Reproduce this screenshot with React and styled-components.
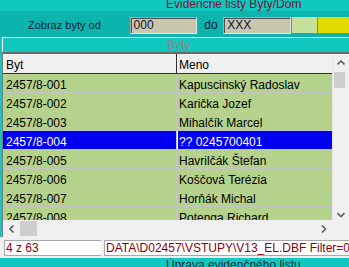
import React from "react";
import styled, { createGlobalStyle } from "styled-components";

const GlobalStyle = createGlobalStyle`
  html, body {
    margin: 0;
    padding: 0;
    background: #10c8c0;
    overflow: hidden;
  }
  * { box-sizing: border-box; }
`;

const rows = [
  ["2457/8-001", "Kapuscinský Radoslav"],
  ["2457/8-002", "Karička Jozef"],
  ["2457/8-003", "Mihalčík Marcel"],
  ["2457/8-004", "?? 0245700401"],
  ["2457/8-005", "Havrilčák Štefan"],
  ["2457/8-006", "Koščová Terézia"],
  ["2457/8-007", "Horňák Michal"],
  ["2457/8-008", "Potenga Richard"],
];

const Chevron = ({ dir }) => {
  const pts = {
    up: "0.5,4.5 4,1 7.5,4.5",
    down: "0.5,1 4,4.5 7.5,1",
    left: "4.5,0.5 1,4 4.5,7.5",
    right: "1,0.5 4.5,4 1,7.5",
  }[dir];
  const vertical = dir === "up" || dir === "down";
  return (
    <svg width={vertical ? 8 : 6} height={vertical ? 6 : 8} viewBox={vertical ? "0 0 8 6" : "0 0 6 8"}>
      <polyline points={pts} fill="none" stroke="#606060" strokeWidth="1.6" />
    </svg>
  );
};

const App = () => {
  return (
    <Page>
      <GlobalStyle />
      <TitleBar>
        <TitleText>Evidencne listy Byty/Dom</TitleText>
      </TitleBar>

      <FilterBand>
        <FieldLabel>Zobraz byty od</FieldLabel>
        <InputBox>000</InputBox>
        <DoLabel>do</DoLabel>
        <InputBox>XXX</InputBox>
        <Swatch $color="#c4e09c" $width={25} />
        <Swatch $color="#e0dc00" $width={31} />
      </FilterBand>

      <PanelCaption>Byty</PanelCaption>

      <GridFrame>
        <Table>
          <HeaderRow>
            <Cell $first $header>Byt</Cell>
            <Cell $header>Meno</Cell>
          </HeaderRow>
          {rows.map(([byt, meno], i) => (
            <Row key={byt} $selected={i === 3}>
              <Cell $first>{byt}</Cell>
              <Cell $focus={i === 3}>{meno}</Cell>
            </Row>
          ))}
        </Table>

        <VScroll>
          <ScrollBtn>
            <Chevron dir="up" />
          </ScrollBtn>
          <VThumb />
          <VTrack />
          <ScrollBtn $end>
            <Chevron dir="down" />
          </ScrollBtn>
        </VScroll>

        <HScroll>
          <ScrollBtn $wide>
            <Chevron dir="left" />
          </ScrollBtn>
          <HThumb />
          <HTrack />
          <ScrollBtn $wide>
            <Chevron dir="right" />
          </ScrollBtn>
        </HScroll>
        <Corner />
      </GridFrame>

      <StatusBar>
        <StatusBox $width={97}>4 z 63</StatusBox>
        <StatusBox>DATA\D02457\VSTUPY\V13_EL.DBF Filter=0</StatusBox>
      </StatusBar>

      <BottomBar>
        <BottomText>Úprava evidenčného listu</BottomText>
      </BottomBar>
    </Page>
  );
};

export default App;

const Page = styled.div`
  width: 349px;
  height: 267px;
  overflow: hidden;
  display: flex;
  flex-direction: column;
  background: #10c8c0;
  font-family: "Liberation Sans", Arial, sans-serif;
  font-size: 12px;
`;

const TitleBar = styled.div`
  height: 11px;
  flex: none;
  overflow: hidden;
  background: #10c8c0;
`;

const TitleText = styled.div`
  margin-top: -3px;
  padding-left: 166px;
  line-height: 14px;
  font-size: 12px;
  color: #7a1030;
  white-space: nowrap;
`;

const FilterBand = styled.div`
  height: 26px;
  flex: none;
  display: flex;
  align-items: flex-start;
  padding-top: 6px;
  background: #0db4ae;
  white-space: nowrap;
`;

const FieldLabel = styled.div`
  width: 130px;
  padding-left: 28px;
  font-size: 11px;
  line-height: 17px;
  color: #0a1a30;
`;

const DoLabel = styled.div`
  width: 26px;
  padding-left: 7px;
  font-size: 12px;
  line-height: 16px;
  color: #0a1a30;
`;

const InputBox = styled.div`
  width: 68px;
  height: 17px;
  overflow: hidden;
  padding: 1px 0 0 3px;
  background: #c8c6ac;
  border: 1px solid #a8a8a8;
  border-right-color: #e4e4e4;
  border-bottom-color: #e4e4e4;
  box-shadow: inset 1px 1px 0 #505050;
  font-size: 12px;
  line-height: 13px;
  color: #101030;
`;

const Swatch = styled.div`
  flex: none;
  width: ${(p) => p.$width}px;
  height: 16px;
  margin-left: 1px;
  background: ${(p) => p.$color};
`;

const PanelCaption = styled.div`
  height: 15px;
  flex: none;
  margin-left: 2px;
  border-top: 1px solid #ffffff;
  border-left: 1px solid #ffffff;
  padding-left: 164px;
  line-height: 14px;
  font-size: 12px;
  color: #8a8a8a;
  overflow: hidden;
`;

const GridFrame = styled.div`
  flex: none;
  margin-left: 2px;
  border-top: 2px solid #6a6a6a;
  border-left: 1px solid #7a7a7a;
  display: grid;
  grid-template-columns: 1fr 17px;
  grid-template-rows: 166px 17px;
  background: #f0f0f0;
`;

const Table = styled.div`
  overflow: hidden;
  display: flex;
  flex-direction: column;
  background: #f0f0f0;
`;

const Row = styled.div`
  flex: none;
  display: grid;
  grid-template-columns: 174px 1fr;
  height: 19px;
  border-bottom: 1px solid #c4c4c4;
  background: ${(p) => (p.$selected ? "#0000f0" : "#b4d28c")};
  color: ${(p) => (p.$selected ? "#ffffff" : "#000000")};
`;

const HeaderRow = styled(Row)`
  height: 20px;
  border-bottom: 1px solid #303030;
  background: #f0f0f0;
  color: #000000;
`;

const Cell = styled.div`
  overflow: hidden;
  white-space: nowrap;
  padding-top: 2px;
  padding-left: ${(p) => (p.$first ? "3px" : "2px")};
  line-height: 18px;
  font-size: 12px;
  border-right: ${(p) =>
    p.$first ? `1px solid ${p.$header ? "#303030" : "#c4c4c4"}` : "none"};
  box-shadow: ${(p) => (p.$focus ? "inset 1px 0 0 #ffffff" : "none")};
`;

const VScroll = styled.div`
  display: flex;
  flex-direction: column;
  background: #f0f0f0;
  border-left: 1px solid #e6e6e6;
`;

const ScrollBtn = styled.div`
  flex: none;
  width: ${(p) => (p.$wide ? "17px" : "auto")};
  height: 17px;
  display: flex;
  justify-content: center;
  align-items: ${(p) => (p.$end ? "flex-end" : "center")};
  padding-bottom: ${(p) => (p.$end ? "2px" : "0")};
`;

const VThumb = styled.div`
  flex: none;
  height: 16px;
  margin: 1px 4px 0 1px;
  background: #cdcdcd;
`;

const VTrack = styled.div`
  flex: 1;
`;

const HScroll = styled.div`
  display: flex;
  align-items: stretch;
  background: #f0f0f0;
`;

const HThumb = styled.div`
  flex: none;
  width: 17px;
  margin: 1px 0;
  background: #cdcdcd;
`;

const HTrack = styled.div`
  flex: 1;
`;

const Corner = styled.div`
  background: #f0f0f0;
`;

const StatusBar = styled.div`
  height: 21px;
  flex: none;
  display: flex;
  gap: 3px;
  padding: 3px 0 0 4px;
  background: #f0f0f0;
  white-space: nowrap;
`;

const StatusBox = styled.div`
  flex: ${(p) => (p.$width ? "none" : "1")};
  width: ${(p) => (p.$width ? `${p.$width}px` : "auto")};
  height: 16px;
  overflow: hidden;
  padding-left: 1px;
  background: #ffffff;
  border: 1px solid #a8a8a8;
  border-right: none;
  font-size: 12px;
  line-height: 14px;
  color: #8a0010;
`;

const BottomBar = styled.div`
  flex: 1;
  overflow: hidden;
  background: #10c8c0;
`;

const BottomText = styled.div`
  padding-left: 166px;
  line-height: 14px;
  font-size: 12px;
  color: #1c2c34;
  white-space: nowrap;
`;
